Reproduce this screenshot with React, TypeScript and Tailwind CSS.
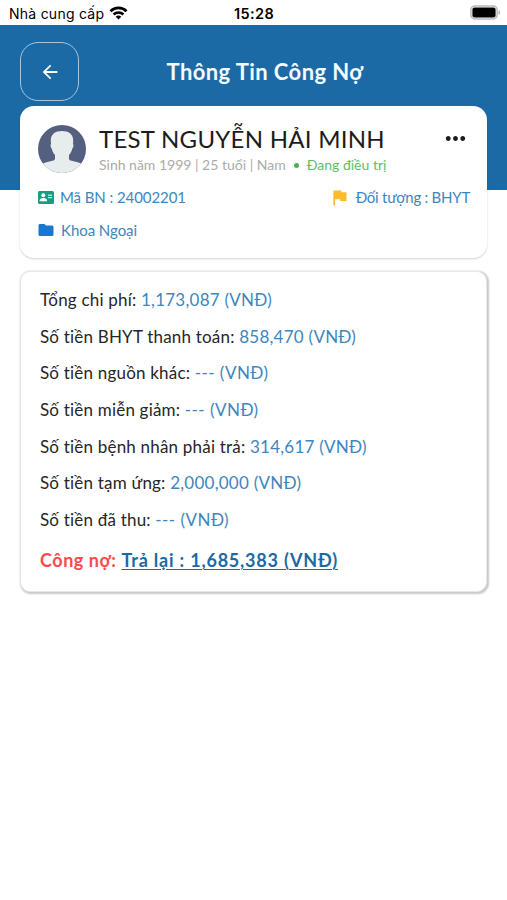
import React from "react";
import { MdArrowBack, MdFlag, MdFolder, MdMoreHoriz } from "react-icons/md";

const UNIT = "(VNĐ)";

const fees = [
  { label: "Tổng chi phí:", value: "1,173,087" },
  { label: "Số tiền BHYT thanh toán:", value: "858,470" },
  { label: "Số tiền nguồn khác:", value: null },
  { label: "Số tiền miễn giảm:", value: null },
  { label: "Số tiền bệnh nhân phải trả:", value: "314,617" },
  { label: "Số tiền tạm ứng:", value: "2,000,000" },
  { label: "Số tiền đã thu:", value: null },
];

function WifiIcon() {
  return (
    <svg width="19" height="14" viewBox="0 0 18 14" fill="none" stroke="#000" strokeWidth="2.7">
      <path d="M1 5.2a11.4 11.4 0 0 1 16 0" />
      <path d="M4.1 8.5a7 7 0 0 1 9.8 0" />
      <path d="M9 13.6 6.200 10.800a3.900 3.900 0 0 1 5.600 0z" fill="#000" stroke="none" />
    </svg>
  );
}

function BatteryIcon() {
  return (
    <svg width="31" height="15" viewBox="0 0 31 15">
      <rect x="0.9" y="0.9" width="26.2" height="13" rx="3.8" fill="#fff" stroke="#b9b9b9" strokeWidth="1.5" />
      <rect x="2.4" y="2.4" width="23.2" height="10" rx="2" fill="#000" />
      <path d="M28.6 5.2c1.9.5 1.9 4 0 4.5z" fill="#b0b0b0" />
    </svg>
  );
}

function Avatar() {
  return (
    <svg width="48" height="48" viewBox="0 0 48 48" className="mt-px shrink-0">
      <defs>
        <clipPath id="avatar">
          <circle cx="24" cy="24" r="24" />
        </clipPath>
      </defs>
      <g clipPath="url(#avatar)">
        <rect width="48" height="48" fill="#556080" />
        <path
          fill="#e7eced"
          d="M24 6c6.5 0 11.2 3 11.2 9.5 0 1.3-.1 2.3-.3 3.3.8.6.8 3.6-.7 4.9-.6 2.700-1.700 4.600-3.200 6.200v3.600c0 1 .6 1.700 1.600 2l6.900 1.700c2.200.5 3.800 1.100 5 2.300V49H3.500v-9.500c1.200-1.200 2.800-1.800 5-2.300l6.900-1.700c1-.3 1.600-1 1.600-2v-3.600c-1.500-1.600-2.600-3.500-3.200-6.200-1.500-1.300-1.500-4.300-.7-4.900-.2-1-.3-2-.3-3.300C12.800 9 17.500 6 24 6z"
        />
      </g>
    </svg>
  );
}

function IdCardIcon() {
  return (
    <svg width="16" height="13" viewBox="0 0 16 13" className="shrink-0">
      <rect width="16" height="13" rx="1.5" fill="#1a9c84" />
      <circle cx="5.3" cy="4.3" r="2" fill="#fff" />
      <path d="M1.6 10.3V9.5c0-1.6 2.2-2.4 3.7-2.4S9 7.9 9 9.5v.8z" fill="#fff" />
      <path d="M10 4.2h4M10 6.7h4" stroke="#fff" strokeWidth="1" />
    </svg>
  );
}

function StatusBar() {
  return (
    <div className="grid h-[25px] grid-cols-3 items-center bg-white pl-[9px] pr-1.5 font-['Inter',sans-serif] text-black">
      <div className="flex items-center gap-[5px] whitespace-nowrap">
        <span className="pt-0.5 text-[14px] leading-5 tracking-[0.25px]">Nhà cung cấp</span>
        <WifiIcon />
      </div>
      <div className="pr-[2px] pt-0.5 text-center text-[14.5px] font-semibold leading-5 tracking-[0.4px]">15:28</div>
      <div className="flex justify-end">
        <BatteryIcon />
      </div>
    </div>
  );
}

function Header() {
  return (
    <header className="h-[165px] bg-[#1b6aa5] px-5 pt-[17px]">
      <div className="grid grid-cols-[59px_1fr_59px] items-center">
        <button className="flex h-[59px] items-center justify-center rounded-[18px] border border-[#a5c6df] text-white">
          <MdArrowBack size={22} />
        </button>
        <h1 className="pl-[23px] text-center text-[22px] font-bold leading-8 tracking-[0.42px] text-[#f2fbff]">
          Thông Tin Công Nợ
        </h1>
      </div>
    </header>
  );
}

function PatientCard() {
  return (
    <section className="h-[152px] rounded-[14px] bg-white px-[18px] pt-[18px] shadow-[0_1px_2px_rgba(0,0,0,0.18)]">
      <div className="flex h-[49px]">
        <Avatar />
        <div className="ml-[13px] flex-1 whitespace-nowrap">
          <h2 className="text-[24px] leading-[30px] tracking-[0.27px] text-[#1c1c1c]">TEST NGUYỄN HẢI MINH</h2>
          <p className="mt-px flex items-center text-[14px] leading-5 text-[#ababab]">
            Sinh năm 1999 | 25 tuổi | Nam
            <span className="ml-2 mr-2 size-[5px] rounded-full bg-[#4caf50]" />
            <span className="text-[#62bd66]">Đang điều trị</span>
          </p>
        </div>
        <MdMoreHoriz size={29} className="-mr-px text-[#1c1c1c]" />
      </div>
      <div className="mt-3.5 flex h-5 items-center justify-between text-[15px] leading-5 text-[#3e86bd]">
        <span className="flex items-center gap-1.5 tracking-[-0.08px]">
          <IdCardIcon />
          Mã BN : 24002201
        </span>
        <span className="-mr-px flex items-center gap-1.5 tracking-[-0.25px]">
          <MdFlag size={21} className="text-[#fbbc2c]" />
          Đối tượng : BHYT
        </span>
      </div>
      <div className="mt-[13px] flex h-5 items-center gap-1.5 text-[15px] leading-5 tracking-[-0.05px] text-[#3e86bd]">
        <MdFolder size={18} className="-ml-px text-[#1976d2]" />
        Khoa Ngoại
      </div>
    </section>
  );
}

function DebtCard() {
  return (
    <section className="mt-[13px] h-[321px] rounded-[10px] border border-[#e8e8e8] bg-white px-[19px] pt-2.5 shadow-[1px_1px_2px_1px_rgba(0,0,0,0.22)]">
      {fees.map((f) => (
        <p
          key={f.label}
          className="h-[36.7px] whitespace-nowrap text-[17px] leading-[36.7px] tracking-[0.2px] text-[#262626]"
        >
          {f.label}{" "}
          <span className={f.value ? "tracking-[0.24px] text-[#3e86bd]" : "tracking-[0.45px] text-[#3e86bd]"}>
            {f.value ?? "---"} {UNIT}
          </span>
        </p>
      ))}
      <p className="mt-[3px] whitespace-nowrap text-[18px] font-bold leading-9 tracking-[0.55px] text-[#fb4b4b]">
        Công nợ:{" "}
        <span className="tracking-[0.8px] text-[#1b6aa5] underline decoration-1 underline-offset-2">
          Trả lại : 1,685,383 {UNIT}
        </span>
      </p>
    </section>
  );
}

export default function App() {
  return (
    <div className="min-h-[900px] w-[507px] bg-white font-['Lato',sans-serif]">
      <StatusBar />
      <Header />
      <main className="-mt-[84px] px-5">
        <PatientCard />
        <DebtCard />
      </main>
    </div>
  );
}
